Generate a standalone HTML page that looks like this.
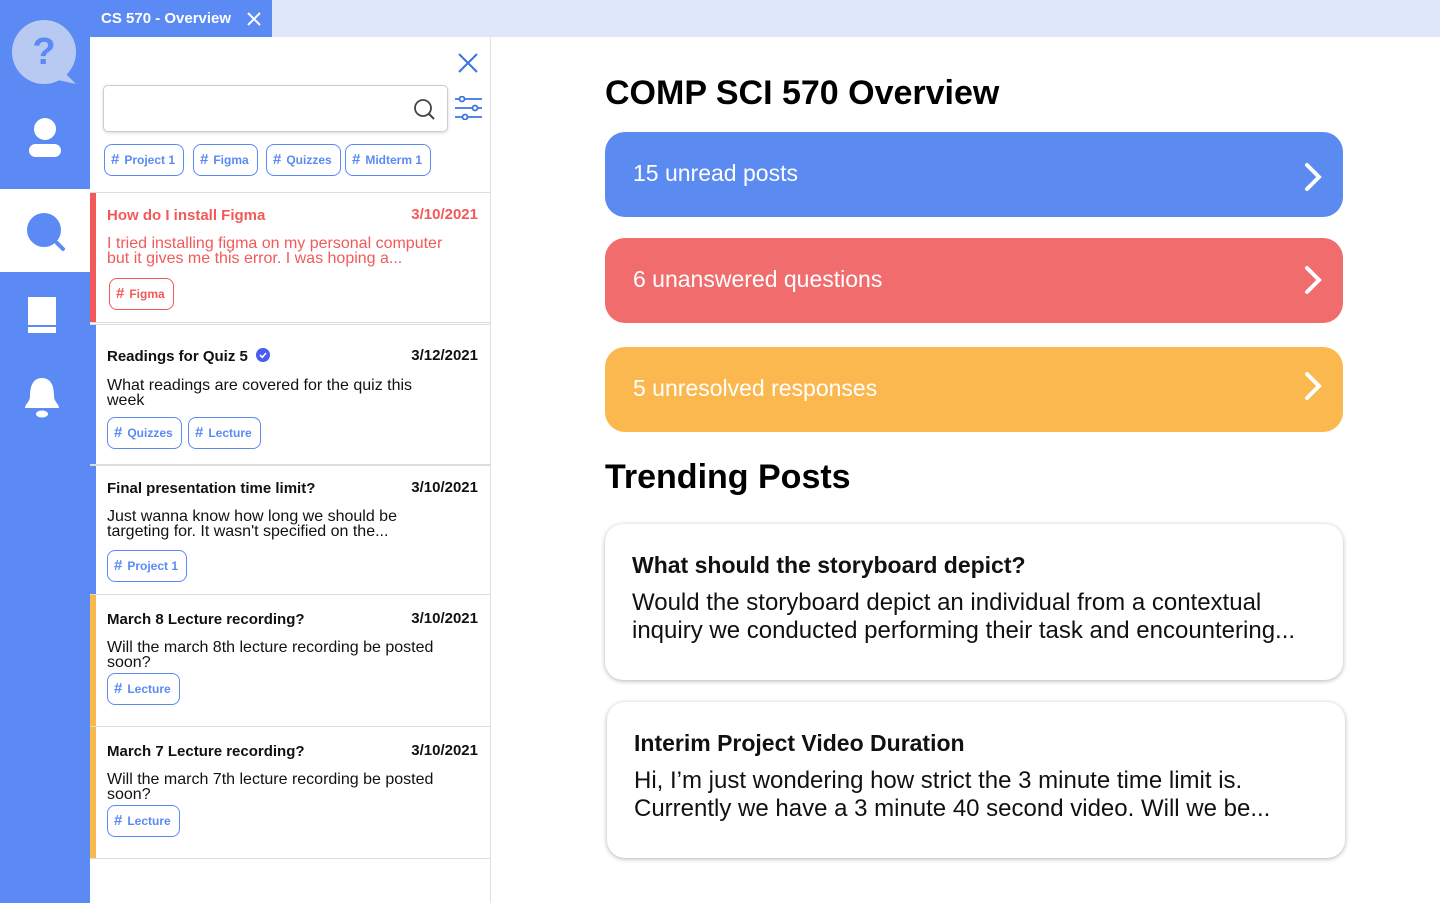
<!DOCTYPE html>
<html><head><meta charset="utf-8"><style>
*{box-sizing:border-box;margin:0;padding:0}
body{width:1440px;height:903px;overflow:hidden;font-family:"Liberation Sans",Roboto,sans-serif;background:#fff;position:relative}
.side{position:absolute;left:0;top:0;width:90px;height:903px;background:#5b8af5}
.topbar{position:absolute;left:90px;top:0;width:1350px;height:37px;background:#dfe8fb}
.tab{position:absolute;left:90px;top:0;width:182px;height:37px;background:#5b8af5;color:#fff;font-weight:bold;font-size:15px;line-height:37px;padding-left:11px}
.panel{position:absolute;left:90px;top:37px;width:401px;height:866px;background:#fff;border-right:1px solid #e0e0e0}
.search{position:absolute;left:13px;top:48px;width:345px;height:47px;border:1px solid #ccc;border-radius:5px;box-shadow:0 1px 3px rgba(0,0,0,.15)}
.tag{position:absolute;height:32px;border:1.5px solid #5b8af5;border-radius:8px;color:#5b8af5;font-size:12px;font-weight:bold;line-height:29px;padding:0 8px 0 6px;white-space:nowrap}
.tag b{font-size:15px;margin-right:5px}
.tag.r{border-color:#f25a5a;color:#f25a5a}
.item{position:absolute;left:0;width:400px;border-bottom:1px solid #ddd;border-top:1px solid #ddd}
.item .bar{position:absolute;left:0;top:0;bottom:0;width:6px}
.item h4{position:absolute;left:17px;top:14px;font-size:15px;color:#111}
.item .d{position:absolute;right:12px;top:13px;font-size:15px;font-weight:bold;color:#111}
.item p{position:absolute;left:17px;top:43px;width:345px;font-size:16px;line-height:15px;color:#111}
.main h1{position:absolute;left:605px;font-size:34px;font-weight:bold;color:#000}
.btn{position:absolute;left:605px;width:738px;height:85px;border-radius:20px;color:#fff;font-size:23px;line-height:82px;padding-left:28px}
.btn svg{position:absolute;right:20px;top:30px}
.card{position:absolute;width:738px;height:156px;border-radius:18px;box-shadow:0 1px 5px rgba(0,0,0,.3);background:#fff;padding:28px 27px}
.card h3{font-size:23px;margin-bottom:10px;color:#111}
.card div{font-size:24px;line-height:28px;color:#111;width:690px}
</style></head><body>
<div class="side">
<svg style="position:absolute;left:12px;top:20px" width="66" height="66" viewBox="0 0 66 66"><circle cx="32" cy="32" r="32" fill="#b8c9f2"/><path d="M52 52 L64 64 L46 60Z" fill="#b8c9f2"/><text x="32" y="44" text-anchor="middle" font-size="38" font-weight="bold" fill="#5b8af5" font-family="Liberation Sans">?</text></svg>
<svg style="position:absolute;left:28px;top:116px" width="34" height="42"><circle cx="17" cy="13" r="11" fill="#fff"/><rect x="1" y="28" width="32" height="13" rx="6.5" fill="#fff"/></svg>
<div style="position:absolute;left:0;top:189px;width:90px;height:83px;background:#fff"></div>
<svg style="position:absolute;left:24px;top:210px" width="44" height="44"><circle cx="20" cy="20" r="17" fill="#5b8af5"/><line x1="33" y1="33" x2="39" y2="39" stroke="#5b8af5" stroke-width="4" stroke-linecap="round"/></svg>
<svg style="position:absolute;left:28px;top:297px" width="28" height="38"><rect x="0" y="0" width="28" height="28" fill="#fff"/><rect x="0" y="30" width="28" height="6" fill="#fff"/></svg>
<svg style="position:absolute;left:24px;top:376px" width="36" height="42"><path d="M18 2C8 2 6 12 6 20 6 26 1 28 1 32 L35 32 C35 28 30 26 30 20 30 12 28 2 18 2Z" fill="#fff"/><ellipse cx="18" cy="38" rx="6" ry="3.5" fill="#fff"/></svg>
</div>
<div class="topbar"></div>
<div class="tab">CS 570 - Overview<svg style="position:absolute;left:157px;top:12px" width="14" height="14"><path d="M1 1L13 13M13 1L1 13" stroke="#fff" stroke-width="2"/></svg></div>
<div class="panel">
<svg style="position:absolute;left:368px;top:16px" width="20" height="20"><path d="M1 1L19 19M19 1L1 19" stroke="#3a74e0" stroke-width="2"/></svg>
<div class="search"><svg style="position:absolute;left:309px;top:12px" width="24" height="24"><circle cx="10" cy="10" r="8" fill="none" stroke="#444" stroke-width="1.8"/><line x1="16" y1="16" x2="21" y2="21" stroke="#444" stroke-width="2"/></svg></div>
<svg style="position:absolute;left:365px;top:59px" width="27" height="24" stroke="#3a74e0" stroke-width="1.8" fill="#fff"><line x1="0" y1="3" x2="27" y2="3"/><line x1="0" y1="12" x2="27" y2="12"/><line x1="0" y1="21" x2="27" y2="21"/><circle cx="7" cy="3" r="2.5"/><circle cx="20" cy="12" r="2.5"/><circle cx="10" cy="21" r="2.5"/></svg>
<div class="tag" style="left:14px;top:107px"><b>#</b>Project 1</div>
<div class="tag" style="left:103px;top:107px"><b>#</b>Figma</div>
<div class="tag" style="left:176px;top:107px"><b>#</b>Quizzes</div>
<div class="tag" style="left:255px;top:107px"><b>#</b>Midterm 1</div>

<div class="item" style="top:155px;height:131px"><div class="bar" style="background:#f25a5a"></div>
<h4 style="color:#f25a5a">How do I install Figma</h4><div class="d" style="color:#f25a5a">3/10/2021</div>
<p style="color:#f25a5a">I tried installing figma on my personal computer but it gives me this error. I was hoping a...</p>
<div class="tag r" style="left:19px;top:85px"><b>#</b>Figma</div></div>

<div class="item" style="top:287px;height:141px"><div class="bar" style="background:#5b8af5"></div>
<h4 style="top:23px">Readings for Quiz 5 <svg width="14" height="14" style="vertical-align:-1px;margin-left:4px"><circle cx="7" cy="7" r="7" fill="#4a5bf0"/><path d="M4 7L6.3 9.3 10 5" stroke="#fff" stroke-width="1.6" fill="none"/></svg></h4><div class="d" style="top:22px">3/12/2021</div>
<p style="top:53px;width:320px">What readings are covered for the quiz this week</p>
<div class="tag" style="left:17px;top:92px"><b>#</b>Quizzes</div>
<div class="tag" style="left:98px;top:92px"><b>#</b>Lecture</div></div>

<div class="item" style="top:428px;height:130px"><div class="bar" style="background:#5b8af5"></div>
<h4>Final presentation time limit?</h4><div class="d">3/10/2021</div>
<p>Just wanna know how long we should be targeting for. It wasn't specified on the...</p>
<div class="tag" style="left:17px;top:84px"><b>#</b>Project 1</div></div>

<div class="item" style="top:557px;height:133px"><div class="bar" style="background:#f8b84e"></div>
<h4 style="top:16px">March 8 Lecture recording?</h4><div class="d" style="top:15px">3/10/2021</div>
<p style="top:45px">Will the march 8th lecture recording be posted soon?</p>
<div class="tag" style="left:17px;top:78px"><b>#</b>Lecture</div></div>

<div class="item" style="top:689px;height:133px"><div class="bar" style="background:#f8b84e"></div>
<h4 style="top:16px">March 7 Lecture recording?</h4><div class="d" style="top:15px">3/10/2021</div>
<p style="top:45px">Will the march 7th lecture recording be posted soon?</p>
<div class="tag" style="left:17px;top:78px"><b>#</b>Lecture</div></div>
</div>

<div class="main">
<h1 style="top:74px">COMP SCI 570 Overview</h1>
<div class="btn" style="top:132px;background:#5b8af0">15 unread posts<svg width="20" height="30"><path d="M4 3L16 15 4 27" stroke="#fff" stroke-width="4" fill="none" stroke-linecap="round"/></svg></div>
<div class="btn" style="top:238px;background:#f16d6d">6 unanswered questions<svg width="20" height="30" style="top:27px"><path d="M4 3L16 15 4 27" stroke="#fff" stroke-width="4" fill="none" stroke-linecap="round"/></svg></div>
<div class="btn" style="top:347px;background:#fbb84f">5 unresolved responses<svg width="20" height="30" style="top:24px"><path d="M4 3L16 15 4 27" stroke="#fff" stroke-width="4" fill="none" stroke-linecap="round"/></svg></div>
<h1 style="top:458px">Trending Posts</h1>
<div class="card" style="left:605px;top:524px"><h3>What should the storyboard depict?</h3><div>Would the storyboard depict an individual from a contextual inquiry we conducted performing their task and encountering...</div></div>
<div class="card" style="left:607px;top:702px"><h3>Interim Project Video Duration</h3><div>Hi, I’m just wondering how strict the 3 minute time limit is. Currently we have a 3 minute 40 second video. Will we be...</div></div>
</div>
</body></html>
